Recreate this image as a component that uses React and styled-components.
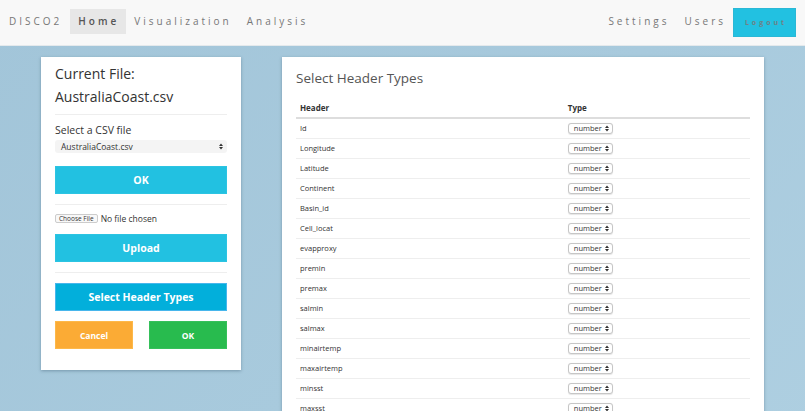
import React from "react";
import styled, { createGlobalStyle } from "styled-components";

const Global = createGlobalStyle`
  html, body { margin: 0; padding: 0; }
  body {
    font-family: "Open Sans", "Liberation Sans", sans-serif;
    background: linear-gradient(135deg, #a2c5d9 0%, #a8cadd 55%, #aecfe1 100%);
    min-height: 100vh;
    color: #333;
  }
  * { box-sizing: border-box; }
`;

const Navbar = styled.nav`
  height: 46px;
  background: #f8f8f8;
  border-bottom: 1px solid #e4e9ec;
  display: flex;
  align-items: center;
  padding: 0 9px;
`;

const NavGroup = styled.div`
  display: flex;
  align-items: center;
  margin-left: ${(p) => (p.$right ? "auto" : "0")};
`;

const Brand = styled.span`
  font-size: 10px;
  letter-spacing: 3px;
  color: #777;
  margin-right: 8px;
  line-height: 25px;
  margin-top: -2px;
`;

const NavItem = styled.span`
  font-size: 10px;
  letter-spacing: 3px;
  color: ${(p) => (p.$active ? "#555" : "#777")};
  font-weight: ${(p) => (p.$active ? 600 : 400)};
  background: ${(p) => (p.$active ? "#e7e7e7" : "transparent")};
  height: 25px;
  line-height: 24px;
  padding: 0 7px 0 8px;
  margin-top: -2px;
`;

const LogoutButton = styled.button`
  font-family: inherit;
  font-size: 7px;
  font-weight: 700;
  letter-spacing: 3px;
  color: #6f8186;
  background: #22c1e1;
  border: 1px solid #2ab8d6;
  height: 29px;
  width: 63px;
  padding: 0 0 0 3px;
  margin-top: -1px;
`;

const Main = styled.main`
  display: flex;
  align-items: flex-start;
  gap: 41px;
  padding: 11px 41px 0;
`;

const Panel = styled.section`
  background: #fff;
  width: ${(p) => p.$w}px;
  flex: none;
  box-shadow: 0 1px 3px rgba(60, 90, 110, 0.45);
  padding: ${(p) => p.$pad};
`;

const FileTitle = styled.div`
  font-size: 14px;
  line-height: 23px;
  color: #333;
`;

const Divider = styled.hr`
  border: 0;
  border-top: 1px solid #eee;
  margin: ${(p) => p.$m || "0"};
`;

const Label = styled.div`
  font-size: 10.5px;
  line-height: 14px;
  color: #333;
`;

const FakeSelect = styled.div`
  display: ${(p) => (p.$block ? "flex" : "inline-flex")};
  align-items: center;
  justify-content: space-between;
  height: ${(p) => (p.$block ? 13 : 11)}px;
  background: ${(p) => (p.$block ? "#f4f4f4" : "#fff")};
  border: ${(p) => (p.$block ? "0" : "1px solid #c6c6c6")};
  border-radius: 3px;
  font-size: ${(p) => (p.$block ? 8.5 : 7.5)}px;
  color: #333;
  padding: ${(p) => (p.$block ? "0 4px 0 6px" : "0 3px 0 5px")};
  gap: 3px;
  box-shadow: ${(p) => (p.$block ? "none" : "0 0.5px 1px rgba(0,0,0,0.1)")};
`;

const Arrows = () => (
  <svg width="4" height="7" viewBox="0 0 4 7">
    <path d="M0 3 L2 0.5 L4 3 Z M0 4 L2 6.5 L4 4 Z" fill="#333" />
  </svg>
);

const Button = styled.button`
  display: block;
  width: ${(p) => p.$w || "100%"};
  height: 28px;
  border: 1px solid ${(p) => p.$border};
  background: ${(p) => p.$bg};
  color: #fff;
  font-family: inherit;
  font-weight: 700;
  font-size: ${(p) => p.$fs || 10.5}px;
  padding: 0;
`;

const ButtonRow = styled.div`
  display: flex;
  justify-content: space-between;
`;

const FileInput = styled.div`
  display: flex;
  align-items: center;
  gap: 3px;
  height: 9px;
  font-size: 8.5px;
  color: #333;
`;

const ChooseButton = styled.button`
  font-family: inherit;
  font-size: 6.5px;
  height: 9px;
  line-height: 7px;
  padding: 0 3px;
  background: #f8f8f8;
  border: 1px solid #ccc;
  border-radius: 2px;
  color: #333;
`;

const PanelTitle = styled.h2`
  margin: 0;
  font-weight: 400;
  font-size: 13.5px;
  line-height: 22px;
  color: #555;
`;

const Table = styled.table`
  width: 100%;
  border-collapse: collapse;
  margin-top: 8px;
`;

const Th = styled.th`
  text-align: left;
  font-size: 8px;
  font-weight: 700;
  color: #333;
  height: 21px;
  padding: 0 4px;
  border-bottom: 2px solid #ddd;
  width: ${(p) => p.$w || "auto"};
`;

const Td = styled.td`
  font-size: 7.5px;
  color: #333;
  height: 20px;
  padding: 0 4px;
  border-bottom: 1px solid #eee;
`;

const headers = [
  "Id",
  "Longitude",
  "Latitude",
  "Continent",
  "Basin_id",
  "Cell_locat",
  "evapproxy",
  "premin",
  "premax",
  "salmin",
  "salmax",
  "minairtemp",
  "maxairtemp",
  "minsst",
  "maxsst",
  "meansst",
];

export default function App() {
  return (
    <>
      <Global />
      <Navbar>
        <NavGroup>
          <Brand>DISCO2</Brand>
          <NavItem $active>Home</NavItem>
          <NavItem>Visualization</NavItem>
          <NavItem>Analysis</NavItem>
        </NavGroup>
        <NavGroup $right>
          <NavItem>Settings</NavItem>
          <NavItem>Users</NavItem>
          <LogoutButton>Logout</LogoutButton>
        </NavGroup>
      </Navbar>
      <Main>
        <Panel $w={200} $pad="5px 14px 21px">
          <FileTitle>Current File:</FileTitle>
          <FileTitle>AustraliaCoast.csv</FileTitle>
          <Divider $m="6px 0 0" />
          <Label style={{ marginTop: 8 }}>Select a CSV file</Label>
          <FakeSelect $block style={{ marginTop: 3 }}>
            <span>AustraliaCoast.csv</span>
            <Arrows />
          </FakeSelect>
          <Button $bg="#22c1e1" $border="#2cc4e2" style={{ marginTop: 13 }}>
            OK
          </Button>
          <Divider $m="10px 0 0" />
          <FileInput style={{ marginTop: 9 }}>
            <ChooseButton>Choose File</ChooseButton>
            <span>No file chosen</span>
          </FileInput>
          <Button $bg="#22c1e1" $border="#2cc4e2" style={{ marginTop: 11 }}>
            Upload
          </Button>
          <Divider $m="10px 0 0" />
          <Button $bg="#02afdb" $border="#47b6ec" style={{ marginTop: 10 }}>
            Select Header Types
          </Button>
          <ButtonRow style={{ marginTop: 10 }}>
            <Button $w="78px" $bg="#fbab35" $border="#fdb849" $fs={8.5}>
              Cancel
            </Button>
            <Button $w="78px" $bg="#28bb4e" $border="#35c05a" $fs={8.5}>
              OK
            </Button>
          </ButtonRow>
        </Panel>
        <Panel $w={482} $pad="10px 14px 20px">
          <PanelTitle>Select Header Types</PanelTitle>
          <Table>
            <thead>
              <tr>
                <Th $w="59%">Header</Th>
                <Th>Type</Th>
              </tr>
            </thead>
            <tbody>
              {headers.map((h) => (
                <tr key={h}>
                  <Td>{h}</Td>
                  <Td>
                    <FakeSelect>
                      <span>number</span>
                      <Arrows />
                    </FakeSelect>
                  </Td>
                </tr>
              ))}
            </tbody>
          </Table>
        </Panel>
      </Main>
    </>
  );
}
